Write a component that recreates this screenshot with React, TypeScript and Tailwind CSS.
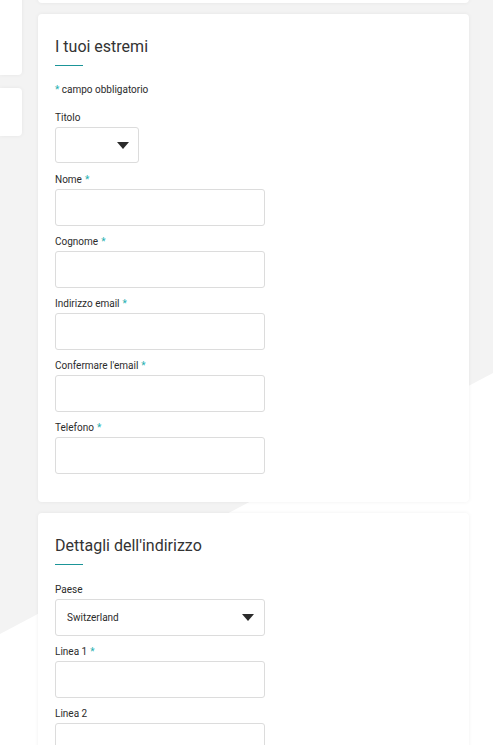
import React from "react";

const font = { fontFamily: "Roboto, 'Liberation Sans', sans-serif" };

function Arrow() {
  return (
    <svg width="12" height="7" viewBox="0 0 12 7" className="shrink-0">
      <path d="M0 0 H12 L6 7 Z" fill="#2b2b2b" />
    </svg>
  );
}

function Label({ text, required }: { text: string; required?: boolean }) {
  return (
    <div className="text-[10px] leading-[12px] text-[#2b2b2b] mb-[3px]">
      {text}
      {required && <span className="text-[#26b0b0] ml-[3px]">*</span>}
    </div>
  );
}

function Field({ label, required, first }: { label: string; required?: boolean; first?: boolean }) {
  return (
    <div className={first ? "mt-[11px]" : "mt-[10px]"}>
      <Label text={label} required={required} />
      <div className="w-[210px] h-[37px] rounded-[3px] border border-[#dcdcdc] bg-white" />
    </div>
  );
}

function Heading({ title }: { title: string }) {
  return (
    <>
      <h2 className="text-[16px] leading-[20px] text-[#333] font-normal">{title}</h2>
      <div className="mt-[8px] h-px w-[28px] bg-[#1b9598]" />
    </>
  );
}

export default function App() {
  return (
    <div className="relative w-[493px] h-[745px] overflow-hidden bg-[#f3f3f3]" style={font}>
      {/* background diagonal */}
      <svg className="absolute inset-0" width="493" height="745" viewBox="0 0 493 745">
        <polygon points="0,634 493,373 493,745 0,745" fill="#ffffff" />
      </svg>

      <div className="relative flex gap-4">
        {/* left column */}
        <div className="w-[22px] flex flex-col gap-[13px] -mt-[20px]">
          <div className="h-[95px] bg-white rounded-r-[4px] shadow-[0_0_4px_rgba(0,0,0,0.06)]" />
          <div className="h-[48px] bg-white rounded-r-[4px] shadow-[0_0_4px_rgba(0,0,0,0.06)]" />
        </div>

        {/* main column */}
        <div className="w-[431px] flex flex-col gap-[11px] -mt-[57px]">
          <div className="h-[60px] bg-white rounded-[4px] shadow-[0_0_4px_rgba(0,0,0,0.06)]" />

          <section className="bg-white rounded-[4px] shadow-[0_0_4px_rgba(0,0,0,0.06)] pl-[17px] pt-[23px] pb-[28px]">
            <Heading title="I tuoi estremi" />
            <div className="mt-[18px] text-[10px] leading-[12px] text-[#2b2b2b]">
              <span className="text-[#26b0b0]">*</span> campo obbligatorio
            </div>
            <div className="mt-[16px]">
              <Label text="Titolo" />
              <div className="w-[84px] h-[36px] rounded-[3px] border border-[#dcdcdc] flex items-center justify-end pr-[9px]">
                <Arrow />
              </div>
            </div>
            <Field label="Nome" required first />
            <Field label="Cognome" required />
            <Field label="Indirizzo email" required />
            <Field label="Confermare l'email" required />
            <Field label="Telefono" required />
          </section>

          <section className="bg-white rounded-[4px] shadow-[0_0_4px_rgba(0,0,0,0.06)] pl-[17px] pt-[23px] pb-[28px]">
            <Heading title="Dettagli dell'indirizzo" />
            <div className="mt-[19px]">
              <Label text="Paese" />
              <div className="w-[210px] h-[37px] rounded-[3px] border border-[#dcdcdc] flex items-center justify-between pl-[11px] pr-[10px]">
                <span className="text-[10px] text-[#2b2b2b]">Switzerland</span>
                <Arrow />
              </div>
            </div>
            <Field label="Linea 1" required />
            <Field label="Linea 2" />
          </section>
        </div>
      </div>
    </div>
  );
}
